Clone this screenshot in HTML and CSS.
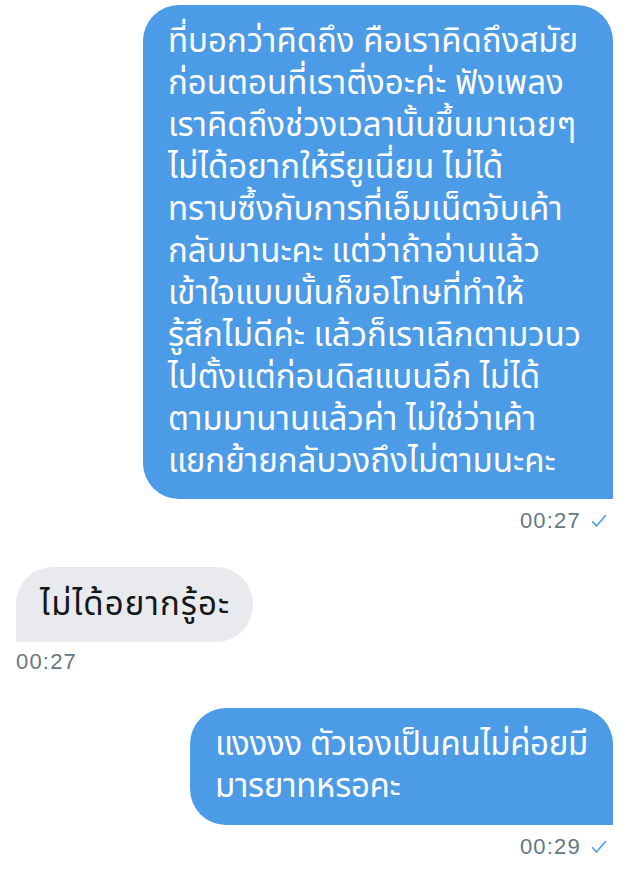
FILE: index.html
```html
<!DOCTYPE html>
<html lang="th">
<head>
    <meta charset="UTF-8">
    <meta name="viewport" content="width=device-width, initial-scale=1.0">
    <title>Messages</title>
    <link rel="stylesheet" href="styles.css">
</head>
<body>
    <div class="chat">
        <div class="msg sent">
            <div class="bubble wide">ที่บอกว่าคิดถึง คือเราคิดถึงสมัย<br>ก่อนตอนที่เราติ่งอะค่ะ ฟังเพลง<br>เราคิดถึงช่วงเวลานั้นขึ้นมาเฉยๆ<br>ไม่ได้อยากให้รียูเนี่ยน ไม่ได้<br>ทราบซึ้งกับการที่เอ็มเน็ตจับเค้า<br>กลับมานะคะ แต่ว่าถ้าอ่านแล้ว<br>เข้าใจแบบนั้นก็ขอโทษที่ทำให้<br>รู้สึกไม่ดีค่ะ แล้วก็เราเลิกตามวนว<br>ไปตั้งแต่ก่อนดิสแบนอีก ไม่ได้<br>ตามมานานแล้วค่า ไม่ใช่ว่าเค้า<br>แยกย้ายกลับวงถึงไม่ตามนะคะ</div>
            <div class="meta">
                <span>00:27</span>
                <svg class="check" viewBox="0 0 16 14"><polyline points="1.5,7.5 5.5,12 14.5,1.5"/></svg>
            </div>
        </div>

        <div class="msg received">
            <div class="bubble">ไม่ได้อยากรู้อะ</div>
            <div class="meta"><span>00:27</span></div>
        </div>

        <div class="msg sent">
            <div class="bubble tight">แงงงง ตัวเองเป็นคนไม่ค่อยมี<br>มารยาทหรอคะ</div>
            <div class="meta">
                <span>00:29</span>
                <svg class="check" viewBox="0 0 16 14"><polyline points="1.5,7.5 5.5,12 14.5,1.5"/></svg>
            </div>
        </div>
    </div>
</body>
</html>
```

FILE: styles.css
```css
body {
    margin: 0;
    background: #fff;
    font-family: "Noto Sans Thai", "Noto Sans", "DejaVu Sans", sans-serif;
}
.chat {
    display: flex;
    flex-direction: column;
    gap: 33px;
    padding: 5px 31px 0 16px;
}
.msg {
    display: flex;
    flex-direction: column;
}
.msg.sent {
    align-items: flex-end;
}
.msg.received {
    align-items: flex-start;
}
.bubble {
    font-size: 33px;
    line-height: 42px;
    padding: 16px 25px 16px 25px;
    white-space: nowrap;
}
.sent .bubble {
    background: #4b9be6;
    color: #fff;
    border-radius: 36px 36px 0 36px;
}
.bubble.wide {
    width: 420px;
}
.bubble.tight {
    letter-spacing: -0.3px;
    padding-bottom: 17px;
}
.received .bubble {
    background: #e8eaed;
    color: #14171a;
    border-radius: 37px 37px 37px 0;
    padding: 17px 23px 16px 24px;
    letter-spacing: 1.1px;
}
.meta {
    display: flex;
    align-items: center;
    gap: 10px;
    margin-top: 9px;
    font-family: "Liberation Sans", Arial, sans-serif;
    font-size: 22px;
    letter-spacing: 1.2px;
    line-height: 26px;
    color: #657786;
}
.sent .meta {
    padding-right: 6px;
}
.received .meta {
    margin-top: 7px;
}
.check {
    width: 16px;
    height: 14px;
    fill: none;
    stroke: #4b9be6;
    stroke-width: 1.6;
    stroke-linecap: round;
    stroke-linejoin: round;
}
```
